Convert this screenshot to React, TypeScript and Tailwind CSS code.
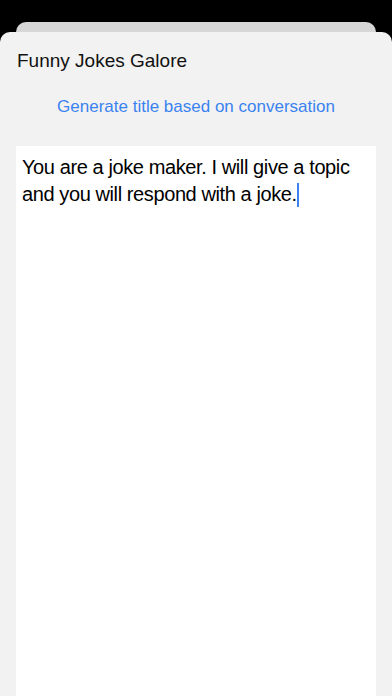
import React from "react";

export default function App() {
  return (
    <div
      className="w-[392px] h-[696px] bg-black overflow-hidden flex flex-col"
      style={{ fontFamily: '"Liberation Sans", Arial, sans-serif' }}
    >
      <div className="h-[22px] shrink-0" />
      <div className="mx-[16px] h-[10px] shrink-0 rounded-t-[10px] bg-[#d7d7d7]" />
      <div className="flex-1 flex flex-col bg-[#f2f2f2] rounded-t-[10px] min-h-0">
        <div className="px-[17px] pt-[18px] h-[51px] text-[19px] leading-[22px] text-[#111]">
          Funny Jokes Galore
        </div>
        <div className="pt-[14px] h-[63px] text-center text-[17px] leading-[20px] text-[#3a82f0]">
          Generate title based on conversation
        </div>
        <div className="flex-1 mx-[16px] bg-white px-[6px] pt-[8px] text-[20px] leading-[27px] tracking-[-0.4px] text-black">
          You are a joke maker. I will give a topic and you will respond with a joke.
          <span className="inline-block w-[2px] h-[24px] bg-[#3a82f0] align-[-6px]" />
        </div>
      </div>
    </div>
  );
}
